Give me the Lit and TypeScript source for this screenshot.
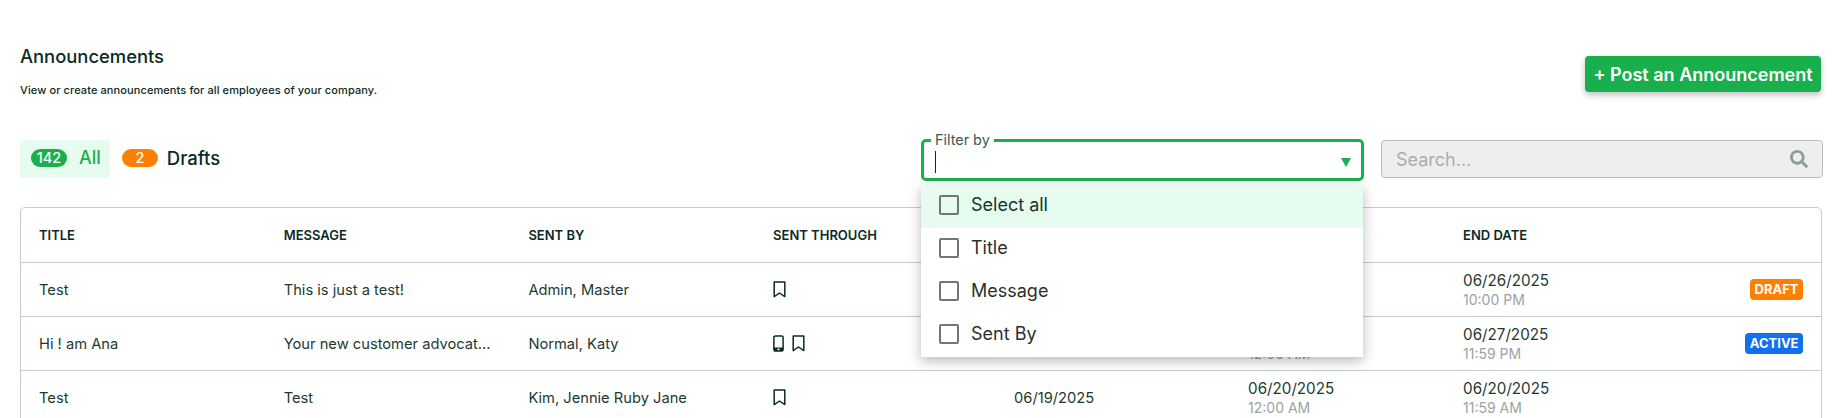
import { LitElement, html, css, svg } from "lit";
import { customElement } from "lit/decorators.js";

const bookmark = html`<svg class="ico" width="13" height="17" viewBox="0 0 13 17"><path d="M1.2 1h10.6v14.6L6.5 12 1.2 15.6z" fill="none" stroke="#0c2a24" stroke-width="1.5" stroke-linejoin="round"/></svg>`;
const phone = html`<svg class="ico" width="11" height="17" viewBox="0 0 11 17"><rect x=".9" y=".9" width="9.2" height="15.2" rx="1.4" fill="none" stroke="#0c2a24" stroke-width="1.5"/><path d="M1 12.6h9V15a1 1 0 0 1-1 1H2a1 1 0 0 1-1-1z" fill="#0c2a24"/><rect x="4.5" y="13.6" width="2" height="1.6" fill="#fff"/></svg>`;
const search = svg`<path d="M505 442.7L405.3 343c-4.5-4.5-10.6-7-17-7H372c27.6-35.3 44-79.7 44-128C416 93.1 322.9 0 208 0S0 93.1 0 208s93.1 208 208 208c48.3 0 92.7-16.4 128-44v16.3c0 6.4 2.5 12.5 7 17l99.7 99.7c9.4 9.4 24.6 9.4 33.9 0l28.3-28.3c9.4-9.4 9.4-24.6.1-34zM208 336c-70.7 0-128-57.2-128-128 0-70.7 57.2-128 128-128 70.7 0 128 57.2 128 128 0 70.7-57.2 128-128 128z"/>`;

interface Row {
  title: string; message: string; by: string; through: unknown;
  sent: string; start: [string, string]; end: [string, string];
  badge?: { text: string; cls: string };
}
const rows: Row[] = [
  { title: "Test", message: "This is just a test!", by: "Admin, Master", through: bookmark, sent: "06/19/2025", start: ["06/25/2025", "12:00 AM"], end: ["06/26/2025", "10:00 PM"], badge: { text: "DRAFT", cls: "draft" } },
  { title: "Hi ! am Ana", message: "Your new customer advocat...", by: "Normal, Katy", through: html`${phone}${bookmark}`, sent: "06/19/2025", start: ["06/20/2025", "12:00 AM"], end: ["06/27/2025", "11:59 PM"], badge: { text: "ACTIVE", cls: "active" } },
  { title: "Test", message: "Test", by: "Kim, Jennie Ruby Jane", through: bookmark, sent: "06/19/2025", start: ["06/20/2025", "12:00 AM"], end: ["06/20/2025", "11:59 AM"] },
];

@customElement("app-root")
export class AppRoot extends LitElement {
  static styles = css`
    :host { display: block; height: 418px; overflow: hidden; background: #fff; font-family: Inter, "Noto Sans", sans-serif; color: #0c2a24; }
    .page { padding: 46px 25px 0 20px; display: flex; flex-direction: column; }
    .head { display: flex; justify-content: space-between; align-items: flex-start; height: 93px; }
    h1 { margin: 0; font-size: 18.4px; line-height: 20px; font-weight: 500; }
    .sub { margin: 16px 0 0; font-size: 11px; line-height: 16px; font-weight: 500; letter-spacing: .1px; }
    .post { margin: 10px 1px 0 0; width: 236px; height: 36px; border: 0; border-radius: 4px; background: #1aaf4d; color: #fff; font: 600 18px Inter, sans-serif; box-shadow: 0 3px 6px rgba(0,0,0,.25); padding: 0; white-space: nowrap; }
    .bar { display: flex; align-items: flex-start; height: 42px; }
    .tabs { display: flex; gap: 12px; align-items: center; flex: 1; margin-top: 1px; }
    .tab { display: flex; align-items: center; height: 38px; padding: 0 9px 0 11px; border-radius: 4px; font-size: 18px; font-weight: 500; line-height: 34px; padding-bottom: 2px; box-sizing: border-box; }
    .tab.on { background: #e6fcee; color: #1aaf4d; }
    .tab.plain { padding-left: 0; font-size: 18.5px; }
    .pill { width: 36px; height: 18px; border-radius: 9px; color: #fff; display: flex; justify-content: center; align-items: center; font-size: 14.5px; font-weight: 500; line-height: 18px; }
    .pill.g { background: #1aaf4d; margin-right: 12px; }
    .pill.o { background: #ff7f00; margin-right: 9px; }
    .filter { position: relative; width: 443px; height: 42px; box-sizing: border-box; border: 3px solid #1aaf4d; border-radius: 5px; display: flex; align-items: center; justify-content: space-between; padding: 4px 10px 0 11px; }
    .legend { position: absolute; left: 7px; top: -10px; background: #fff; padding: 0 4px; font-size: 14.4px; line-height: 16px; color: #3a5a50; }
    .caret { width: 1px; height: 22px; background: #0c2a24; }
    .tri { width: 0; height: 0; border-left: 5.5px solid transparent; border-right: 5.5px solid transparent; border-top: 9px solid #1aaf4d; margin-top: 1px; }
    .menu { position: absolute; z-index: 5; left: -3px; top: 43px; width: 442px; background: #fff; box-shadow: 0 4px 12px rgba(0,0,0,.28); display: flex; flex-direction: column; }
    .opt { height: 43px; box-sizing: border-box; display: flex; align-items: center; gap: 12px; padding: 0 0 4px 18px; font-size: 18px; color: #2b2f2e; }
    .opt.hi { background: #e6fcee; color: #17352d; }
    .box { width: 20px; height: 20px; box-sizing: border-box; border: 2px solid #757575; border-radius: 2px; }
    .search { margin: 1px -1px 0 17px; width: 442px; height: 38px; box-sizing: border-box; background: #eee; border: 1px solid #b3c0bc; border-radius: 4px; display: flex; align-items: center; justify-content: space-between; padding: 0 14px; color: #a3b0ac; font-size: 18px; flex: none; }
    .search svg { width: 18px; height: 18px; fill: #8aa097; }
    .table { margin-top: 26px; border: 1px solid #c4cfcc; border-radius: 5px 5px 0 0; }
    .row { display: grid; grid-template-columns: 244.7px 244.7px 244.7px 241px 234px 215px 1fr 80px; padding-left: 18px; height: 54px; align-items: center; border-top: 1px solid #c4cfcc; box-sizing: border-box; font-size: 14.7px; color: #1c3a32; }
    .row.hd { border-top: 0; height: 54px; font-size: 13px; font-weight: 600; color: #0c2a24; padding-bottom: 1px; }
    .cell { white-space: nowrap; }
    .icons { display: flex; gap: 8px; align-items: center; }
    .ico { display: block; }
    .date { font-size: 15.2px; line-height: 20px; }
    .time { font-size: 14px; line-height: 18px; color: #9aa5a2; }
    .tag { justify-self: end; margin-right: 18px; height: 21px; padding: 0 4.5px; border-radius: 4px; color: #fff; font-size: 13px; font-weight: 700; line-height: 21px; white-space: nowrap; }
    .draft { background: #ff7f00; }
    .active { background: #1070ee; }
  `;

  render() {
    return html`<div class="page">
      <div class="head">
        <div>
          <h1>Announcements</h1>
          <p class="sub">View or create announcements for all employees of your company.</p>
        </div>
        <button class="post">+ Post an Announcement</button>
      </div>
      <div class="bar">
        <div class="tabs">
          <div class="tab on"><span class="pill g">142</span>All</div>
          <div class="tab plain"><span class="pill o">2</span>Drafts</div>
        </div>
        <div class="filter">
          <span class="legend">Filter by</span>
          <span class="caret"></span>
          <span class="tri"></span>
          <div class="menu">
            ${["Select all", "Title", "Message", "Sent By"].map(
              (o, i) => html`<div class="opt ${i === 0 ? "hi" : ""}"><span class="box"></span>${o}</div>`
            )}
          </div>
        </div>
        <div class="search"><span>Search...</span><svg viewBox="0 0 512 512">${search}</svg></div>
      </div>
      <div class="table">
        <div class="row hd">
          <div>TITLE</div><div>MESSAGE</div><div>SENT BY</div><div>SENT THROUGH</div><div>SENT DATE</div><div>START DATE</div><div>END DATE</div>
        </div>
        ${rows.map(
          (r) => html`<div class="row">
            <div class="cell">${r.title}</div>
            <div class="cell">${r.message}</div>
            <div class="cell">${r.by}</div>
            <div class="icons">${r.through}</div>
            <div class="cell">${r.sent}</div>
            <div class="date">${r.start[0]}<div class="time">${r.start[1]}</div></div>
            <div class="date">${r.end[0]}<div class="time">${r.end[1]}</div></div>
            ${r.badge ? html`<div class="tag ${r.badge.cls}">${r.badge.text}</div>` : ""}
          </div>`
        )}
      </div>
    </div>`;
  }
}
